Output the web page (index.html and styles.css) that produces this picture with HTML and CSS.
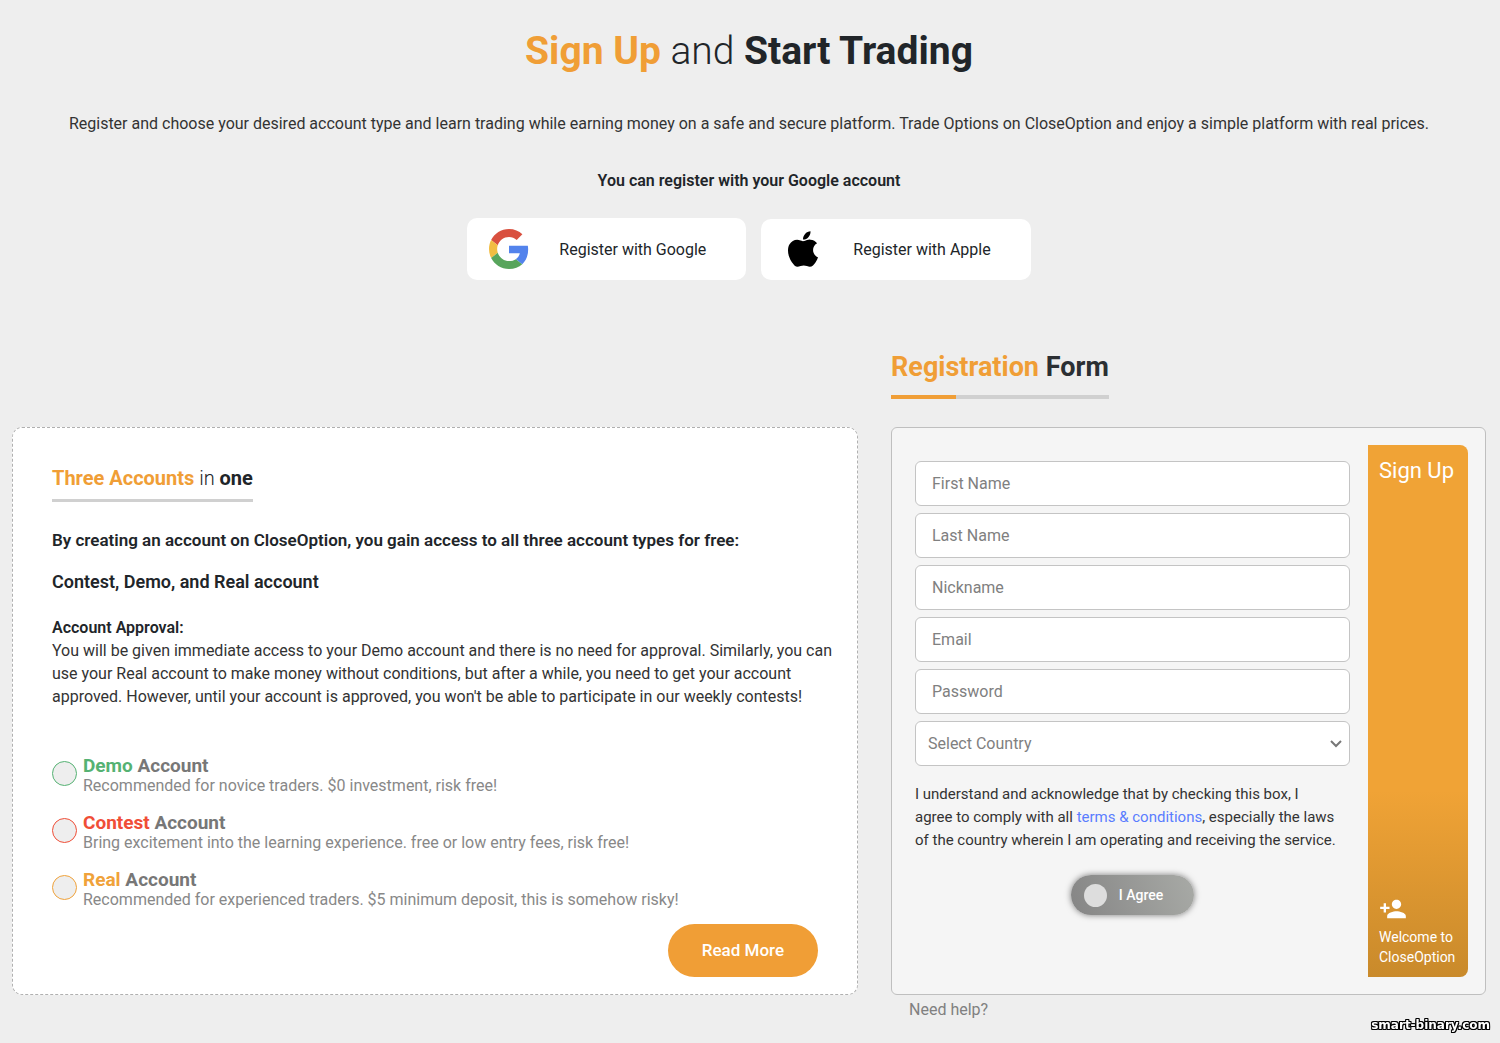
FILE: index.html
```html
<!DOCTYPE html>
<html lang="en">
<head>
    <meta charset="UTF-8">
    <meta name="viewport" content="width=device-width, initial-scale=1.0">
    <title>Sign Up and Start Trading</title>
    <link rel="stylesheet" href="styles.css">
</head>
<body>
    <header class="intro">
        <h1><b class="orange">Sign Up</b> and <b>Start Trading</b></h1>
        <p class="lead">Register and choose your desired account type and learn trading while earning money on a safe and secure platform. Trade Options on CloseOption and enjoy a simple platform with real prices.</p>
        <p class="google-note">You can register with your Google account</p>
        <div class="social">
            <button type="button" class="social-btn google">
                <svg width="40" height="40" viewBox="0 0 48 48">
                    <path fill="#d9503f" d="M24 9.5c3.54 0 6.71 1.22 9.21 3.6l6.85-6.85C35.9 2.38 30.47 0 24 0 14.62 0 6.51 5.38 2.56 13.22l7.98 6.19C12.43 13.72 17.74 9.5 24 9.5z"/>
                    <path fill="#5383ec" d="M46.98 24.55c0-1.57-.15-3.09-.38-4.55H24v9.02h12.94c-.58 2.96-2.26 5.48-4.78 7.18l7.73 6c4.51-4.18 7.09-10.36 7.09-17.65z"/>
                    <path fill="#f2bd42" d="M10.53 28.59c-.48-1.45-.76-2.99-.76-4.59s.27-3.14.76-4.59l-7.98-6.19C.92 16.46 0 20.12 0 24c0 3.88.92 7.54 2.56 10.78l7.97-6.19z"/>
                    <path fill="#58a55c" d="M24 48c6.48 0 11.93-2.13 15.89-5.81l-7.73-6c-2.15 1.45-4.92 2.3-8.16 2.3-6.26 0-11.57-4.22-13.47-9.91l-7.98 6.19C6.51 42.62 14.62 48 24 48z"/>
                </svg>
                <span>Register with Google</span>
            </button>
            <button type="button" class="social-btn apple">
                <svg width="30" height="38" viewBox="0 0 842 1000">
                    <path d="M824.666 779.304c-15.123 34.937-33.023 67.096-53.763 96.663-28.271 40.308-51.419 68.208-69.258 83.702-27.653 25.431-57.282 38.456-89.01 39.196-22.776 0-50.244-6.481-82.218-19.629-32.08-13.085-61.56-19.566-88.516-19.566-28.271 0-58.591 6.481-91.023 19.566-32.481 13.148-58.648 20-78.654 20.678-30.425 1.297-60.752-12.099-91.023-40.245-19.321-16.852-43.487-45.74-72.438-86.665-31.061-43.703-56.597-94.38-76.602-152.155C10.739 658.443 0 598.013 0 539.509c0-67.017 14.481-124.818 43.487-173.255 22.796-38.906 53.123-69.596 91.078-92.126s78.966-34.012 123.132-34.746c24.166 0 55.856 7.475 95.238 22.166 39.27 14.74 64.485 22.215 75.54 22.215 8.266 0 36.277-8.741 83.763-26.166 44.906-16.16 82.806-22.851 113.854-20.216 84.133 6.79 147.341 39.955 189.377 99.707-75.245 45.591-112.466 109.447-111.725 191.364.679 63.807 23.827 116.905 69.32 159.064 20.617 19.568 43.641 34.691 69.258 45.431-5.556 16.111-11.42 31.543-17.656 46.357zM631.709 20.006c0 50.012-18.27 96.707-54.69 139.928-43.949 51.382-97.108 81.073-154.754 76.388-.735-6-1.161-12.315-1.161-18.951 0-48.01 20.901-99.392 58.017-141.403 18.53-21.271 42.098-38.957 70.678-53.066C578.316 9.002 605.289 1.316 630.66 0c.741 6.686 1.049 13.372 1.049 20.006z"/>
                </svg>
                <span>Register with Apple</span>
            </button>
        </div>
    </header>

    <main class="columns">
        <section class="accounts">
            <h2><b class="orange">Three Accounts</b> in <b>one</b></h2>
            <h3>By creating an account on CloseOption, you gain access to all three account types for free:</h3>
            <h4>Contest, Demo, and Real account</h4>
            <p class="approval"><b>Account Approval:</b><br>You will be given immediate access to your Demo account and there is no need for approval. Similarly, you can use your Real account to make money without conditions, but after a while, you need to get your account approved. However, until your account is approved, you won't be able to participate in our weekly contests!</p>

            <div class="types">
                <label class="type demo">
                    <input type="radio" name="account">
                    <span><strong><b>Demo</b> Account</strong>Recommended for novice traders. $0 investment, risk free!</span>
                </label>
                <label class="type contest">
                    <input type="radio" name="account">
                    <span><strong><b>Contest</b> Account</strong>Bring excitement into the learning experience. free or low entry fees, risk free!</span>
                </label>
                <label class="type real">
                    <input type="radio" name="account">
                    <span><strong><b>Real</b> Account</strong>Recommended for experienced traders. $5 minimum deposit, this is somehow risky!</span>
                </label>
            </div>
            <a class="read-more" href="#">Read More</a>
        </section>

        <section class="register">
            <h2><span class="orange">Registration</span> Form</h2>
            <form class="form-card">
                <div class="fields">
                    <input type="text" placeholder="First Name" aria-label="First Name">
                    <input type="text" placeholder="Last Name" aria-label="Last Name">
                    <input type="text" placeholder="Nickname" aria-label="Nickname">
                    <input type="email" placeholder="Email" aria-label="Email">
                    <input type="password" placeholder="Password" aria-label="Password">
                    <div class="select-box">
                        <select aria-label="Select Country">
                            <option>Select Country</option>
                        </select>
                        <svg width="12" height="8" viewBox="0 0 12 8"><path d="M1 1l5 5 5-5" fill="none" stroke="#777" stroke-width="2"/></svg>
                    </div>
                    <p class="terms">I understand and acknowledge that by checking this box, I agree to comply with all <a href="#">terms &amp; conditions</a>, especially the laws of the country wherein I am operating and receiving the service.</p>
                    <label class="agree"><input type="checkbox"><span>I Agree</span></label>
                </div>
                <button type="submit" class="signup">
                    <span class="signup-title">Sign Up</span>
                    <span class="welcome">
                        <svg width="28" height="28" viewBox="0 0 24 24"><path fill="#fff" d="M15 12c2.21 0 4-1.79 4-4s-1.790-4-4-4-4 1.790-4 4 1.790 4 4 4zm-9-2V7H4v3H1v2h3v3h2v-3h3v-2H6zm9 4c-2.670 0-8 1.340-8 4v2h16v-2c0-2.660-5.330-4-8-4z"/></svg>
                        Welcome to CloseOption
                    </span>
                </button>
            </form>
        </section>
    </main>
    <footer class="columns-foot">
        <a class="help" href="#">Need help?</a>
    </footer>
    <div class="watermark">smart-binary.com</div>
</body>
</html>
```

FILE: styles.css
```css
* {
    box-sizing: border-box;
}
body {
    margin: 0;
    padding: 0 14px 0 12px;
    background: #eee;
    color: #212529;
    font-family: Roboto, sans-serif;
    font-size: 16px;
    line-height: 23px;
}
h1, h2, h3, h4, p {
    margin: 0;
}
b {
    font-weight: 700;
}
button, input, select {
    font-family: inherit;
    font-size: 16px;
}
.orange {
    color: #f09e36;
}

.intro {
    padding-top: 26px;
    text-align: center;
}
h1 {
    font-size: 39px;
    line-height: 50px;
    font-weight: 300;
}
.lead {
    margin-top: 36px;
    color: #333;
}
.google-note {
    margin-top: 34px;
    font-weight: 600;
}
.social {
    display: flex;
    justify-content: center;
    align-items: flex-end;
    gap: 15px;
    margin-top: 26px;
}
.social-btn {
    display: flex;
    align-items: center;
    border: 0;
    border-radius: 10px;
    background: #fff;
    color: #212529;
    cursor: pointer;
}
.google {
    gap: 30px;
    padding: 11px 40px 11px 22px;
}
.apple {
    gap: 35px;
    padding: 11px 40px 12px 27px;
}

.columns {
    display: grid;
    grid-template-columns: 846fr 595fr;
    gap: 33px;
    align-items: end;
    margin-top: 63px;
}
.accounts {
    display: flex;
    flex-direction: column;
    align-items: flex-start;
    min-height: 568px;
    padding: 38px 24px 17px 39px;
    border: 1px dashed #b0b0b0;
    border-radius: 10px;
    background: #fff;
}
.accounts h2 {
    padding-bottom: 8px;
    border-bottom: 3px solid #d0d0d0;
    font-size: 20px;
    line-height: 25px;
    font-weight: 300;
}
.accounts h3 {
    margin-top: 26px;
    font-size: 17px;
    line-height: 24px;
    font-weight: 600;
}
.accounts h4 {
    margin-top: 18px;
    font-size: 18px;
    line-height: 24px;
    font-weight: 600;
}
.approval {
    margin-top: 22px;
    color: #333;
}
.approval b {
    color: #212529;
    font-weight: 600;
}
.types {
    display: flex;
    flex-direction: column;
    gap: 17px;
    margin-top: 48px;
}
.type {
    display: flex;
    gap: 6px;
    color: #888;
    line-height: 20px;
}
.type strong {
    display: block;
    color: #777;
    font-size: 19px;
}
.type input {
    appearance: none;
    flex: none;
    width: 25px;
    height: 25px;
    margin: 5px 0 0;
    border: 1px solid currentColor;
    border-radius: 50%;
    background: #eee;
}
.demo b, .demo input {
    color: #55b273;
}
.contest b, .contest input {
    color: #f04e37;
}
.real b, .real input {
    color: #f0a23a;
}
.read-more {
    align-self: flex-end;
    margin-top: auto;
    margin-right: 15px;
    padding: 15px 34px;
    border-radius: 27px;
    background: #f09e36;
    color: #fff;
    font-size: 17px;
    font-weight: 500;
    text-decoration: none;
}

.register {
    display: flex;
    flex-direction: column;
    align-items: flex-start;
}
.register h2 {
    padding: 8px 0 12px;
    border-bottom: 4px solid;
    border-image: linear-gradient(to right, #f09e36 67px, #d0d0d0 67px) 4;
    color: #2b2f33;
    font-size: 27px;
    line-height: 32px;
}
.form-card {
    display: flex;
    gap: 18px;
    width: 100%;
    min-height: 568px;
    margin-top: 28px;
    padding: 17px 17px 17px 23px;
    border: 1px solid #bfbfbf;
    border-radius: 6px;
    background: #f5f5f5;
}
.fields {
    display: flex;
    flex: 1;
    flex-direction: column;
    gap: 7px;
    padding-top: 16px;
}
.fields input:not([type="checkbox"]), .fields select {
    width: 100%;
    height: 45px;
    padding: 0 16px;
    border: 1px solid #c4c4c4;
    border-radius: 6px;
    background: #fff;
}
.fields input::placeholder {
    color: #808080;
}
.select-box {
    position: relative;
}
.fields select {
    display: block;
    padding: 0 12px;
    appearance: none;
    color: #808080;
}
.select-box svg {
    position: absolute;
    top: 19px;
    right: 8px;
}
.terms {
    margin-top: 10px;
    padding-right: 12px;
    color: #333;
    font-size: 15px;
}
.terms a {
    color: #5a7dff;
    text-decoration: none;
}
.agree {
    display: flex;
    align-self: center;
    align-items: center;
    gap: 12px;
    height: 40px;
    margin-top: 16px;
    padding: 0 31px 0 13px;
    border-radius: 20px;
    background: linear-gradient(70deg, #858585, #a8aaa6);
    box-shadow: 0 0 6px rgba(0, 0, 0, 0.5);
    color: #fff;
    font-size: 14px;
    font-weight: 500;
}
.agree input {
    appearance: none;
    width: 23px;
    height: 23px;
    margin: 0;
    border-radius: 50%;
    background: #ddd;
}
.signup {
    display: flex;
    flex: none;
    flex-direction: column;
    justify-content: space-between;
    width: 100px;
    padding: 12px 11px 10px;
    border: 0;
    border-radius: 0 8px 8px 0;
    background: linear-gradient(#f0a336 65%, #c98a2b);
    color: #fff;
    text-align: left;
    cursor: pointer;
}
.signup-title {
    font-size: 22px;
    line-height: 28px;
    white-space: nowrap;
}
.welcome {
    font-size: 14px;
    line-height: 20px;
}
.welcome svg {
    display: block;
    margin-bottom: 4px;
}

/* same tracks as .columns so the link sits under the form */
.columns-foot {
    display: grid;
    grid-template-columns: 846fr 595fr;
    gap: 33px;
    padding-top: 3px;
}
.help {
    grid-column: 2;
    padding-left: 18px;
    color: #808080;
    text-decoration: none;
}
.watermark {
    position: fixed;
    right: 10px;
    bottom: 10px;
    color: #fff;
    font-family: "DejaVu Sans", sans-serif;
    font-size: 12px;
    line-height: 16px;
    font-weight: 700;
    text-shadow: -1px -1px #000, 0 -1px #000, 1px -1px #000, -1px 0 #000, 1px 0 #000, -1px 1px #000, 0 1px #000, 1px 1px #000;
}
```
